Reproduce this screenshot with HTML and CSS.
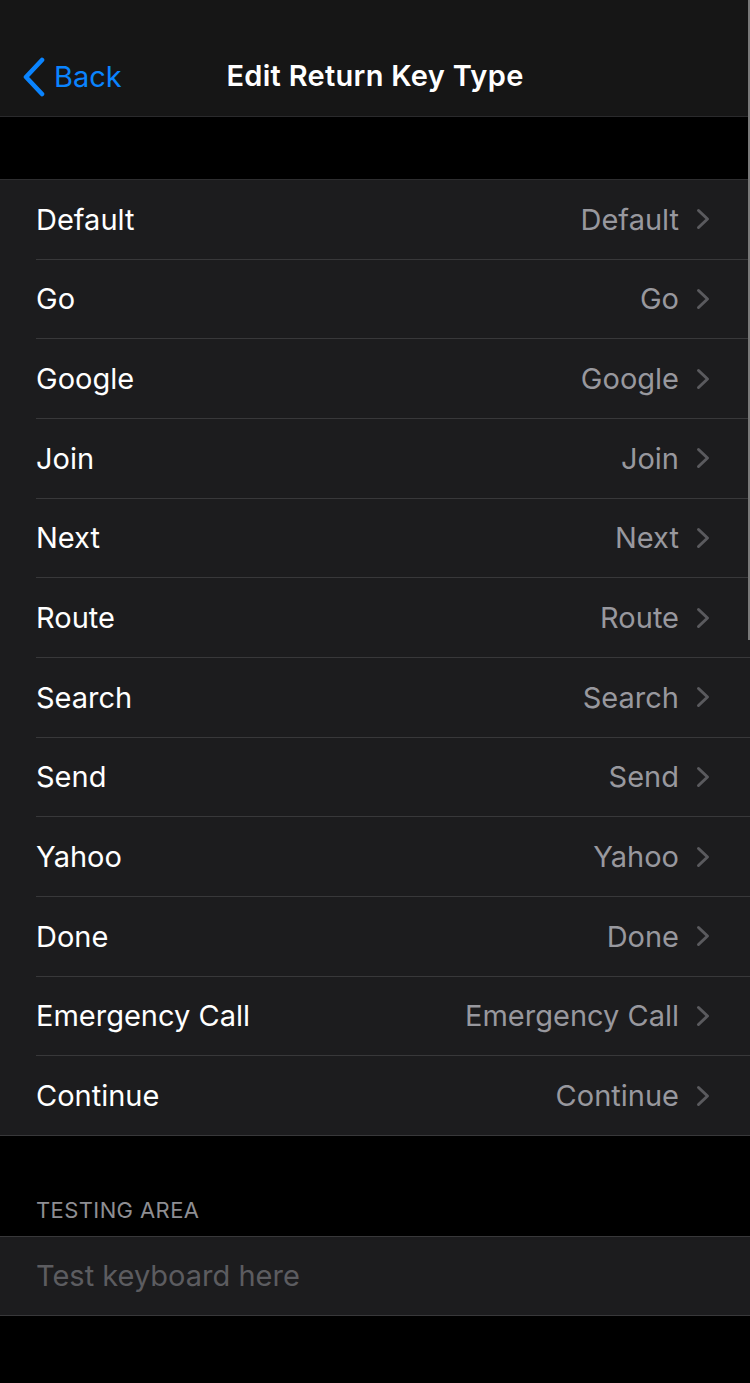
FILE: index.html
```html
<!DOCTYPE html>
<html lang="en">
<head>
<meta charset="utf-8">
<title>Edit Return Key Type</title>
<link rel="stylesheet" href="styles.css">
</head>
<body>
<div class="screen">
  <header class="nav">
    <a class="back">
      <svg class="back-icon" viewBox="0 0 24 40" width="24" height="40"><path d="M20 3 L4 20 L20 37" fill="none" stroke="#0a84ff" stroke-width="4.6" stroke-linecap="round" stroke-linejoin="round"/></svg>
      <span class="back-label">Back</span>
    </a>
    <h1 class="title">Edit Return Key Type</h1>
  </header>

  <div class="spacer"></div>

  <ul class="list">
    <li class="row"><div class="row-inner"><span class="label">Default</span><span class="value">Default</span><svg class="chev" viewBox="0 0 14 22" width="14" height="22"><path d="M2.5 2.5 L11.5 11 L2.5 19.5" fill="none" stroke="#5a5a5e" stroke-width="3" stroke-linecap="round" stroke-linejoin="round"/></svg></div></li>
    <li class="row"><div class="row-inner"><span class="label">Go</span><span class="value">Go</span><svg class="chev" viewBox="0 0 14 22" width="14" height="22"><path d="M2.5 2.5 L11.5 11 L2.5 19.5" fill="none" stroke="#5a5a5e" stroke-width="3" stroke-linecap="round" stroke-linejoin="round"/></svg></div></li>
    <li class="row"><div class="row-inner"><span class="label">Google</span><span class="value">Google</span><svg class="chev" viewBox="0 0 14 22" width="14" height="22"><path d="M2.5 2.5 L11.5 11 L2.5 19.5" fill="none" stroke="#5a5a5e" stroke-width="3" stroke-linecap="round" stroke-linejoin="round"/></svg></div></li>
    <li class="row"><div class="row-inner"><span class="label">Join</span><span class="value">Join</span><svg class="chev" viewBox="0 0 14 22" width="14" height="22"><path d="M2.5 2.5 L11.5 11 L2.5 19.5" fill="none" stroke="#5a5a5e" stroke-width="3" stroke-linecap="round" stroke-linejoin="round"/></svg></div></li>
    <li class="row"><div class="row-inner"><span class="label">Next</span><span class="value">Next</span><svg class="chev" viewBox="0 0 14 22" width="14" height="22"><path d="M2.5 2.5 L11.5 11 L2.5 19.5" fill="none" stroke="#5a5a5e" stroke-width="3" stroke-linecap="round" stroke-linejoin="round"/></svg></div></li>
    <li class="row"><div class="row-inner"><span class="label">Route</span><span class="value">Route</span><svg class="chev" viewBox="0 0 14 22" width="14" height="22"><path d="M2.5 2.5 L11.5 11 L2.5 19.5" fill="none" stroke="#5a5a5e" stroke-width="3" stroke-linecap="round" stroke-linejoin="round"/></svg></div></li>
    <li class="row"><div class="row-inner"><span class="label">Search</span><span class="value">Search</span><svg class="chev" viewBox="0 0 14 22" width="14" height="22"><path d="M2.5 2.5 L11.5 11 L2.5 19.5" fill="none" stroke="#5a5a5e" stroke-width="3" stroke-linecap="round" stroke-linejoin="round"/></svg></div></li>
    <li class="row"><div class="row-inner"><span class="label">Send</span><span class="value">Send</span><svg class="chev" viewBox="0 0 14 22" width="14" height="22"><path d="M2.5 2.5 L11.5 11 L2.5 19.5" fill="none" stroke="#5a5a5e" stroke-width="3" stroke-linecap="round" stroke-linejoin="round"/></svg></div></li>
    <li class="row"><div class="row-inner"><span class="label">Yahoo</span><span class="value">Yahoo</span><svg class="chev" viewBox="0 0 14 22" width="14" height="22"><path d="M2.5 2.5 L11.5 11 L2.5 19.5" fill="none" stroke="#5a5a5e" stroke-width="3" stroke-linecap="round" stroke-linejoin="round"/></svg></div></li>
    <li class="row"><div class="row-inner"><span class="label">Done</span><span class="value">Done</span><svg class="chev" viewBox="0 0 14 22" width="14" height="22"><path d="M2.5 2.5 L11.5 11 L2.5 19.5" fill="none" stroke="#5a5a5e" stroke-width="3" stroke-linecap="round" stroke-linejoin="round"/></svg></div></li>
    <li class="row"><div class="row-inner"><span class="label">Emergency Call</span><span class="value">Emergency Call</span><svg class="chev" viewBox="0 0 14 22" width="14" height="22"><path d="M2.5 2.5 L11.5 11 L2.5 19.5" fill="none" stroke="#5a5a5e" stroke-width="3" stroke-linecap="round" stroke-linejoin="round"/></svg></div></li>
    <li class="row"><div class="row-inner"><span class="label">Continue</span><span class="value">Continue</span><svg class="chev" viewBox="0 0 14 22" width="14" height="22"><path d="M2.5 2.5 L11.5 11 L2.5 19.5" fill="none" stroke="#5a5a5e" stroke-width="3" stroke-linecap="round" stroke-linejoin="round"/></svg></div></li>
  </ul>

  <div class="section-header">TESTING AREA</div>
  <div class="test-group">
    <div class="test-row"><span class="placeholder">Test keyboard here</span></div>
  </div>

  <div class="scrollbar"></div>
</div>
</body>
</html>
```

FILE: styles.css
```css
* {
  box-sizing: border-box;
}

html, body {
  margin: 0;
  padding: 0;
  background: #000000;
}

body {
  font-family: Inter, "Noto Sans", "Liberation Sans", sans-serif;
  -webkit-font-smoothing: antialiased;
}

.screen {
  position: relative;
  width: 750px;
  height: 1383px;
  overflow: hidden;
  background: #000000;
}

.nav {
  position: relative;
  height: 117px;
  padding-top: 56px;
  background: #161616;
  border-bottom: 1px solid #2a2a2c;
  display: flex;
  align-items: flex-start;
  justify-content: center;
}

.back {
  position: absolute;
  left: 22px;
  top: 57px;
  display: flex;
  align-items: center;
  gap: 8px;
  color: #0a84ff;
  font-size: 29px;
  line-height: 40px;
}

.back-icon {
  display: block;
}

.title {
  margin: 0;
  color: #ffffff;
  font-size: 29px;
  font-weight: 600;
  line-height: 40px;
  letter-spacing: 0.3px;
}

.spacer {
  height: 62px;
}

.list {
  list-style: none;
  margin: 0;
  padding: 0;
  background: #1c1c1e;
  border-top: 1px solid #2e2e30;
  border-bottom: 1px solid #38383a;
}

.row {
  padding-left: 36px;
}

.row-inner {
  height: 79.67px;
  display: flex;
  align-items: center;
  padding-right: 40px;
  border-bottom: 1px solid #38383a;
  font-size: 29px;
}

.row:last-child .row-inner {
  border-bottom: none;
  height: 78.67px;
}

.label {
  flex: 1;
  color: #ffffff;
}

.value {
  color: #98989e;
  margin-right: 17px;
}

.chev {
  display: block;
  flex: none;
}

.section-header {
  height: 100px;
  padding: 0 36px 13px;
  display: flex;
  align-items: flex-end;
  color: #8e8e93;
  font-size: 22px;
  line-height: 26px;
  letter-spacing: 0.4px;
}

.test-group {
  background: #1c1c1e;
  border-top: 1px solid #38383a;
  border-bottom: 1px solid #38383a;
}

.test-row {
  height: 78px;
  padding-left: 36px;
  display: flex;
  align-items: center;
  font-size: 29px;
}

.placeholder {
  color: #5c5c60;
}

.scrollbar {
  position: absolute;
  right: 0;
  top: 0;
  width: 2px;
  height: 640px;
  background: #7a7a7a;
}
```
